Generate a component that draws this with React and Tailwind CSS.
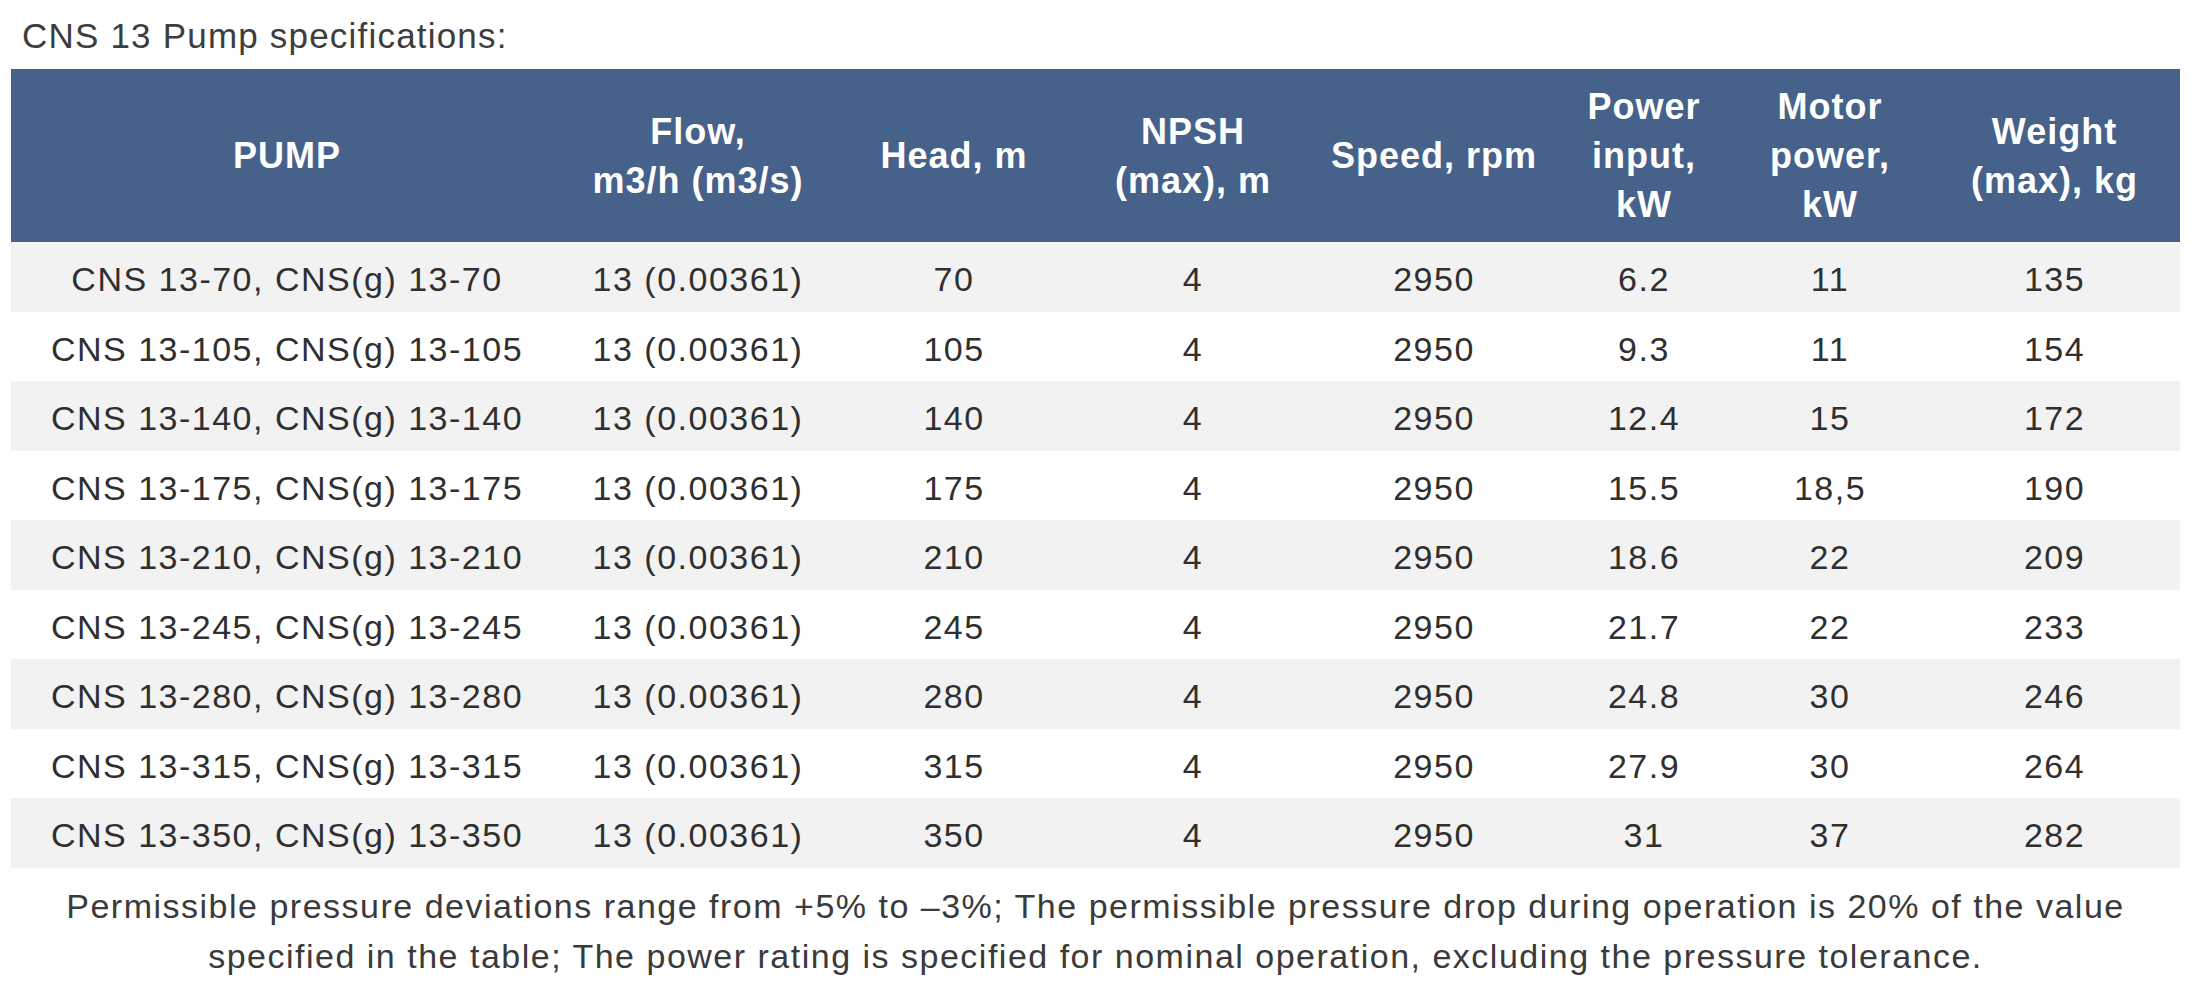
import React from "react";

const rows = [
  ["CNS 13-70, CNS(g) 13-70", "13 (0.00361)", "70", "4", "2950", "6.2", "11", "135"],
  ["CNS 13-105, CNS(g) 13-105", "13 (0.00361)", "105", "4", "2950", "9.3", "11", "154"],
  ["CNS 13-140, CNS(g) 13-140", "13 (0.00361)", "140", "4", "2950", "12.4", "15", "172"],
  ["CNS 13-175, CNS(g) 13-175", "13 (0.00361)", "175", "4", "2950", "15.5", "18,5", "190"],
  ["CNS 13-210, CNS(g) 13-210", "13 (0.00361)", "210", "4", "2950", "18.6", "22", "209"],
  ["CNS 13-245, CNS(g) 13-245", "13 (0.00361)", "245", "4", "2950", "21.7", "22", "233"],
  ["CNS 13-280, CNS(g) 13-280", "13 (0.00361)", "280", "4", "2950", "24.8", "30", "246"],
  ["CNS 13-315, CNS(g) 13-315", "13 (0.00361)", "315", "4", "2950", "27.9", "30", "264"],
  ["CNS 13-350, CNS(g) 13-350", "13 (0.00361)", "350", "4", "2950", "31", "37", "282"],
];

const headers = [
  ["PUMP"],
  ["Flow,", "m3/h (m3/s)"],
  ["Head, m"],
  ["NPSH", "(max), m"],
  ["Speed, rpm"],
  ["Power", "input,", "kW"],
  ["Motor", "power,", "kW"],
  ["Weight", "(max), kg"],
];

const grid =
  "grid grid-cols-[552px_270px_242px_236px_246px_174px_198px_251px]";

export default function App() {
  return (
    <div className="min-h-[1000px] w-[2205px] bg-white font-['Liberation_Sans',Arial,sans-serif]">
      <div className="ml-[11px] w-[2169px]">
        <div className="pt-[2px] pl-[11px] text-[35px] leading-[67px] tracking-[1.2px] text-[#3d3d3d]">
          CNS 13 Pump specifications:
        </div>

        <div className={`${grid} h-[173px] bg-[#46628b]`}>
          {headers.map((lines, i) => (
            <div
              key={i}
              className="flex flex-col items-center justify-center text-center text-[36px] font-bold leading-[49px] tracking-[1px] text-white"
            >
              {lines.map((l, j) => (
                <span key={j} className="whitespace-nowrap">
                  {l}
                </span>
              ))}
            </div>
          ))}
        </div>

        {rows.map((r, i) => (
          <div
            key={i}
            className={`${grid} h-[69.5px] ${i % 2 === 0 ? "bg-[#f2f2f2]" : "bg-white"}`}
          >
            {r.map((c, j) => (
              <div
                key={j}
                className="flex items-center justify-center whitespace-nowrap pt-[6px] text-[34px] tracking-[1.5px] text-[#2f2f2f]"
              >
                {c}
              </div>
            ))}
          </div>
        ))}

        <div className="pt-[13px] text-center text-[34px] leading-[50px] tracking-[1.5px] text-[#3a3a3a]">
          Permissible pressure deviations range from +5% to –3%; The permissible pressure drop during operation is 20% of the value
          <br />
          specified in the table; The power rating is specified for nominal operation, excluding the pressure tolerance.
        </div>
      </div>
    </div>
  );
}
